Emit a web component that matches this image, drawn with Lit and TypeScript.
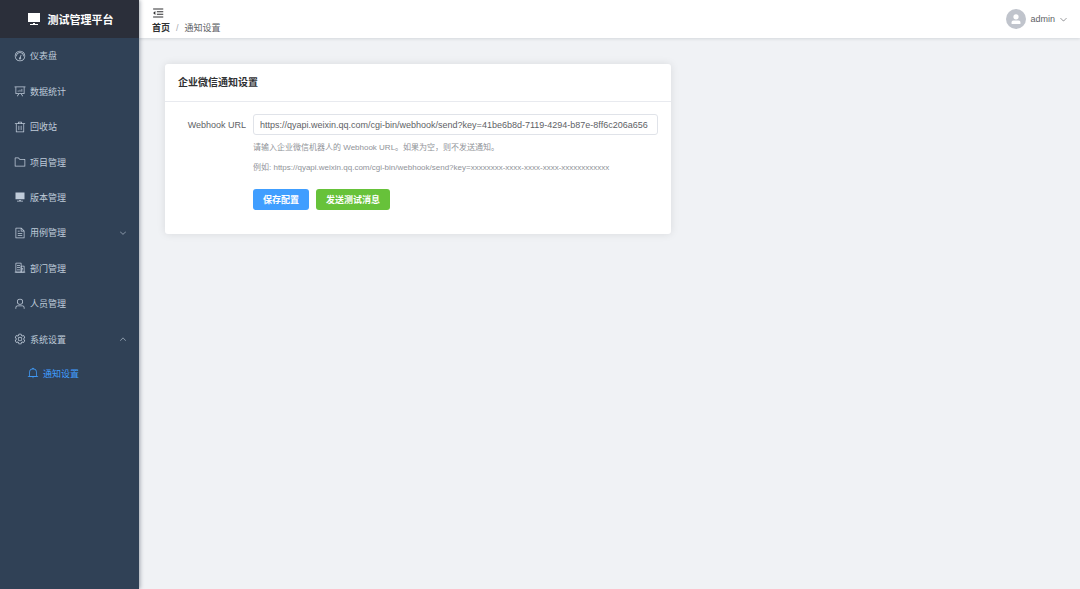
import { LitElement, html, css, svg } from "lit";
import { customElement, property, state } from "lit/decorators.js";

const ICONS: Record<string, string[]> = {
  dashboard: [
    "M512 896a384 384 0 1 0 0-768 384 384 0 0 0 0 768m0 64a448 448 0 1 1 0-896 448 448 0 0 1 0 896",
    "M192 512a320 320 0 1 1 640 0 32 32 0 1 1-64 0 256 256 0 1 0-512 0 32 32 0 0 1-64 0",
    "M570.432 627.84A96 96 0 1 1 509.568 608l60.992-187.776A32 32 0 1 1 631.424 440l-60.992 187.776zM502.08 734.464a32 32 0 1 0 19.84-60.928 32 32 0 0 0-19.84 60.928",
  ],
  chart: [
    "m665.216 768 110.848 192h-73.856L591.36 768H433.024L322.176 960H248.32l110.848-192H160a32 32 0 0 1-32-32V192H64a32 32 0 0 1 0-64h896a32 32 0 1 1 0 64h-64v544a32 32 0 0 1-32 32zM832 192H192v512h640zM352 448a32 32 0 0 1 32 32v64a32 32 0 0 1-64 0v-64a32 32 0 0 1 32-32m160-64a32 32 0 0 1 32 32v128a32 32 0 0 1-64 0V416a32 32 0 0 1 32-32m160-64a32 32 0 0 1 32 32v192a32 32 0 1 1-64 0V352a32 32 0 0 1 32-32",
  ],
  trash: [
    "M160 256H96a32 32 0 0 1 0-64h256V95.936a32 32 0 0 1 32-32h256a32 32 0 0 1 32 32V192h256a32 32 0 1 1 0 64h-64v672a32 32 0 0 1-32 32H192a32 32 0 0 1-32-32zm448-64v-64H416v64zM224 896h576V256H224zm192-128a32 32 0 0 1-32-32V416a32 32 0 0 1 64 0v320a32 32 0 0 1-32 32m192 0a32 32 0 0 1-32-32V416a32 32 0 0 1 64 0v320a32 32 0 0 1-32 32",
  ],
  folder: [
    "M128 192v640h768V320H485.76L357.504 192zm-32-64h287.872l128.384 128H928a32 32 0 0 1 32 32v576a32 32 0 0 1-32 32H96a32 32 0 0 1-32-32V160a32 32 0 0 1 32-32",
  ],
  platform: ["M448 832v-64h128v64h192v64H256v-64zM128 704V128h768v576z"],
  document: [
    "M832 384H576V128H192v768h640zm-26.496-64L640 154.496V320zM160 64h480l256 256v608a32 32 0 0 1-32 32H160a32 32 0 0 1-32-32V96a32 32 0 0 1 32-32m160 448h384v64H320zm0-192h160v64H320zm0 384h384v64H320z",
  ],
  building: [
    "M192 128v704h384V128zm-32-64h448a32 32 0 0 1 32 32v768a32 32 0 0 1-32 32H160a32 32 0 0 1-32-32V96a32 32 0 0 1 32-32",
    "M256 256h256v64H256zm0 192h256v64H256zm0 192h256v64H256zm384-128h128v64H640zm0 128h128v64H640zM64 832h896v64H64z",
    "M640 384v448h192V384zm-32-64h256a32 32 0 0 1 32 32v512a32 32 0 0 1-32 32H608a32 32 0 0 1-32-32V352a32 32 0 0 1 32-32",
  ],
  user: [
    "M512 512a192 192 0 1 0 0-384 192 192 0 0 0 0 384m0 64a256 256 0 1 1 0-512 256 256 0 0 1 0 512m320 320v-96a96 96 0 0 0-96-96H288a96 96 0 0 0-96 96v96a32 32 0 1 1-64 0v-96a160 160 0 0 1 160-160h448a160 160 0 0 1 160 160v96a32 32 0 1 1-64 0",
  ],
  setting: [
    "M600.704 64a32 32 0 0 1 30.464 22.208l35.2 109.376c14.784 7.232 28.928 15.36 42.432 24.512l112.384-24.192a32 32 0 0 1 34.432 15.36L944.32 364.8a32 32 0 0 1-4.032 37.504l-77.12 85.12a357.12 357.12 0 0 1 0 49.024l77.12 85.248a32 32 0 0 1 4.032 37.504l-88.704 153.6a32 32 0 0 1-34.432 15.296L708.8 803.904c-13.44 9.088-27.648 17.28-42.368 24.512l-35.264 109.376A32 32 0 0 1 600.704 960H423.296a32 32 0 0 1-30.464-22.208L357.696 828.48a351.616 351.616 0 0 1-42.56-24.64l-112.32 24.256a32 32 0 0 1-34.432-15.36L79.68 659.2a32 32 0 0 1 4.032-37.504l77.12-85.248a357.12 357.12 0 0 1 0-48.896l-77.12-85.248A32 32 0 0 1 79.68 364.8l88.704-153.6a32 32 0 0 1 34.432-15.296l112.32 24.256c13.568-9.152 27.776-17.408 42.56-24.64l35.2-109.312A32 32 0 0 1 423.232 64H600.64zm-23.424 64H446.72l-36.352 113.088-24.512 11.968a294.113 294.113 0 0 0-34.816 20.096l-22.656 15.36-116.224-25.088-65.28 113.152 79.68 88.192-1.92 27.136a293.12 293.12 0 0 0 0 40.192l1.92 27.136-79.808 88.192 65.344 113.152 116.224-25.024 22.656 15.296a294.113 294.113 0 0 0 34.816 20.096l24.512 11.968L446.72 896h130.688l36.48-113.152 24.448-11.904a288.282 288.282 0 0 0 34.752-20.096l22.592-15.296 116.288 25.024 65.28-113.152-79.744-88.192 1.92-27.136a293.12 293.12 0 0 0 0-40.256l-1.92-27.136 79.808-88.128-65.344-113.152-116.288 24.96-22.592-15.232a287.616 287.616 0 0 0-34.752-20.096l-24.448-11.904L577.344 128zM512 320a192 192 0 1 1 0 384 192 192 0 0 1 0-384m0 64a128 128 0 1 0 0 256 128 128 0 0 0 0-256",
  ],
  bell: [
    "M512 64a64 64 0 0 1 64 64v64H448v-64a64 64 0 0 1 64-64",
    "M256 768h512V448a256 256 0 1 0-512 0zm256-640a320 320 0 0 1 320 320v384H192V448a320 320 0 0 1 320-320",
    "M96 768h832q32 0 32 32t-32 32H96q-32 0-32-32t32-32m352 128h128a64 64 0 0 1-128 0",
  ],
  down: [
    "M831.872 340.864 512 652.672 192.128 340.864a30.592 30.592 0 0 0-42.752 0 29.12 29.12 0 0 0 0 41.6L489.664 714.24a32 32 0 0 0 44.672 0l340.288-331.712a29.12 29.12 0 0 0 0-41.728 30.592 30.592 0 0 0-42.752 0z",
  ],
  up: [
    "m488.832 344.32-339.84 356.672a32 32 0 0 0 0 44.16l.384.384a29.44 29.44 0 0 0 42.688 0l320-335.872 319.872 335.872a29.44 29.44 0 0 0 42.688 0l.384-.384a32 32 0 0 0 0-44.16L535.168 344.32a32 32 0 0 0-46.336 0",
  ],
  person: [
    "M288 320a224 224 0 1 0 448 0 224 224 0 1 0-448 0m544 608H160a32 32 0 0 1-32-32v-96a160 160 0 0 1 160-160h448a160 160 0 0 1 160 160v96a32 32 0 0 1-32 32z",
  ],
  fold: [
    "M96 128h864v88H96zM416 352h544v88H416zM416 576h544v88H416zM96 800h864v88H96zM288 336v352L96 512z",
  ],
};

@customElement("ui-icon")
export class UiIcon extends LitElement {
  @property() name = "";

  static styles = css`
    :host { display: block; flex: none; width: 12px; height: 12px; }
    .glyph { display: block; width: 100%; height: 100%; fill: currentColor; }
  `;

  render() {
    return html`<svg class="glyph" viewBox="0 0 1024 1024" aria-hidden="true">
      ${(ICONS[this.name] ?? []).map((d) => svg`<path d=${d}></path>`)}
    </svg>`;
  }
}

interface MenuEntry {
  icon: string;
  label: string;
  arrow?: "up" | "down";
}

const MENU: MenuEntry[] = [
  { icon: "dashboard", label: "仪表盘" },
  { icon: "chart", label: "数据统计" },
  { icon: "trash", label: "回收站" },
  { icon: "folder", label: "项目管理" },
  { icon: "platform", label: "版本管理" },
  { icon: "document", label: "用例管理", arrow: "down" },
  { icon: "building", label: "部门管理" },
  { icon: "user", label: "人员管理" },
  { icon: "setting", label: "系统设置", arrow: "up" },
];

@customElement("app-sidebar")
export class AppSidebar extends LitElement {
  static styles = css`
    :host {
      display: block;
      background: #304156;
      color: #bfcbd9;
      box-shadow: 1px 0 4px rgba(0, 21, 41, 0.35);
      z-index: 1;
    }
    .brand {
      display: flex;
      align-items: center;
      justify-content: center;
      gap: 6px;
      height: 38px;
      background: #2b2f3a;
      color: #fff;
      font-size: 11px;
      font-weight: 700;
    }
    .brand-icon { width: 16px; height: 16px; }
    .menu, .submenu { margin: 0; padding: 0; list-style: none; }
    .menu { display: grid; grid-auto-rows: 1fr; min-height: 319px; }
    .link {
      display: flex;
      align-items: center;
      gap: 4px;
      height: 100%;
      padding: 0 12px 0 14px;
      color: inherit;
      text-decoration: none;
    }
    .label { flex: 1; }
    .arrow { width: 8px; height: 8px; }
    .submenu .link { height: 32px; padding-left: 27px; color: #409eff; }
  `;

  render() {
    return html`
      <div class="brand"><ui-icon class="brand-icon" name="platform"></ui-icon><span>测试管理平台</span></div>
      <nav>
        <ul class="menu">
          ${MENU.map(
            (m) => html`<li>
              <a class="link" href="#">
                <ui-icon name=${m.icon}></ui-icon>
                <span class="label">${m.label}</span>
                ${m.arrow ? html`<ui-icon class="arrow" name=${m.arrow}></ui-icon>` : ""}
              </a>
            </li>`
          )}
        </ul>
        <ul class="submenu">
          <li>
            <a class="link" href="#" aria-current="page"><ui-icon name="bell"></ui-icon><span class="label">通知设置</span></a>
          </li>
        </ul>
      </nav>
    `;
  }
}

@customElement("app-topbar")
export class AppTopbar extends LitElement {
  static styles = css`
    :host {
      display: flex;
      align-items: center;
      justify-content: space-between;
      height: 38px;
      padding: 0 12px 0 13px;
      background: #fff;
      box-shadow: 0 1px 3px rgba(0, 21, 41, 0.12);
      color: #606266;
    }
    button {
      display: flex;
      align-items: center;
      padding: 0;
      border: 0;
      background: none;
      color: inherit;
      font: inherit;
      cursor: pointer;
    }
    .left { display: grid; gap: 3px; padding-top: 3px; }
    .toggle { color: #303133; justify-self: start; }
    .crumbs { display: flex; gap: 6px; line-height: 13px; }
    .home { color: #303133; font-weight: 700; text-decoration: none; }
    .slash { color: #a8abb2; }
    .account { gap: 4px; }
    .avatar {
      display: grid;
      place-items: center;
      width: 20px;
      height: 20px;
      border-radius: 50%;
      background: #c0c4cc;
      color: #fff;
    }
    .caret { width: 9px; height: 9px; }
  `;

  render() {
    return html`
      <div class="left">
        <button class="toggle" aria-label="折叠菜单"><ui-icon name="fold"></ui-icon></button>
        <nav class="crumbs">
          <a class="home" href="#">首页</a><span class="slash">/</span><span>通知设置</span>
        </nav>
      </div>
      <button class="account">
        <span class="avatar"><ui-icon name="person"></ui-icon></span>
        <span>admin</span>
        <ui-icon class="caret" name="down"></ui-icon>
      </button>
    `;
  }
}

@customElement("notify-card")
export class NotifyCard extends LitElement {
  @state() private url =
    "https://qyapi.weixin.qq.com/cgi-bin/webhook/send?key=41be6b8d-7119-4294-b87e-8ff6c206a656";

  static styles = css`
    :host {
      display: block;
      box-sizing: border-box;
      max-width: 506px;
      border-radius: 3px;
      background: #fff;
      box-shadow: 0 0 8px rgba(0, 0, 0, 0.1);
      color: #606266;
    }
    .title {
      margin: 0;
      padding: 0 13px;
      border-bottom: 1px solid #e8eaef;
      color: #303133;
      font-size: 10px;
      line-height: 37px;
    }
    .form {
      display: grid;
      grid-template-columns: 68px minmax(0, 1fr);
      column-gap: 7px;
      padding: 12px 13px 24px;
    }
    .label { text-align: right; line-height: 22px; }
    .input {
      box-sizing: border-box;
      width: 100%;
      height: 21px;
      padding: 0 6px;
      border: 1px solid #e0e3e9;
      border-radius: 3px;
      background: #fff;
      color: #606266;
      font: inherit;
      outline: none;
    }
    .hints, .actions { grid-column: 2; }
    .hint { margin: 0; color: #909399; font-size: 8px; line-height: 20px; }
    .hints { padding-top: 2px; }
    .actions { display: flex; gap: 7px; padding-top: 11px; }
    .button {
      height: 21px;
      padding: 0 10px;
      border: 0;
      border-radius: 3px;
      background: #409eff;
      color: #fff;
      font: inherit;
      font-weight: 700;
      cursor: pointer;
    }
    .success { background: #67c23a; }
  `;

  render() {
    return html`
      <h2 class="title">企业微信通知设置</h2>
      <form class="form" @submit=${(e: Event) => e.preventDefault()}>
        <label class="label" for="webhook">Webhook URL</label>
        <input
          class="input"
          id="webhook"
          type="text"
          .value=${this.url}
          @input=${(e: Event) => (this.url = (e.target as HTMLInputElement).value)}
        />
        <div class="hints">
          <p class="hint">请输入企业微信机器人的 Webhook URL。如果为空，则不发送通知。</p>
          <p class="hint">例如: https://qyapi.weixin.qq.com/cgi-bin/webhook/send?key=xxxxxxxx-xxxx-xxxx-xxxx-xxxxxxxxxxxx</p>
        </div>
        <div class="actions">
          <button class="button" type="submit">保存配置</button>
          <button class="button success" type="button">发送测试消息</button>
        </div>
      </form>
    `;
  }
}

@customElement("app-root")
export class AppRoot extends LitElement {
  static styles = css`
    :host {
      display: grid;
      grid-template-columns: 139px minmax(0, 1fr);
      min-height: 100vh;
      background: #f0f2f5;
      font-family: "Liberation Sans", "Noto Sans CJK SC", sans-serif;
      font-size: 9px;
    }
    .content { padding: 26px; }
  `;

  render() {
    return html`
      <app-sidebar></app-sidebar>
      <div>
        <app-topbar></app-topbar>
        <main class="content"><notify-card></notify-card></main>
      </div>
    `;
  }
}
